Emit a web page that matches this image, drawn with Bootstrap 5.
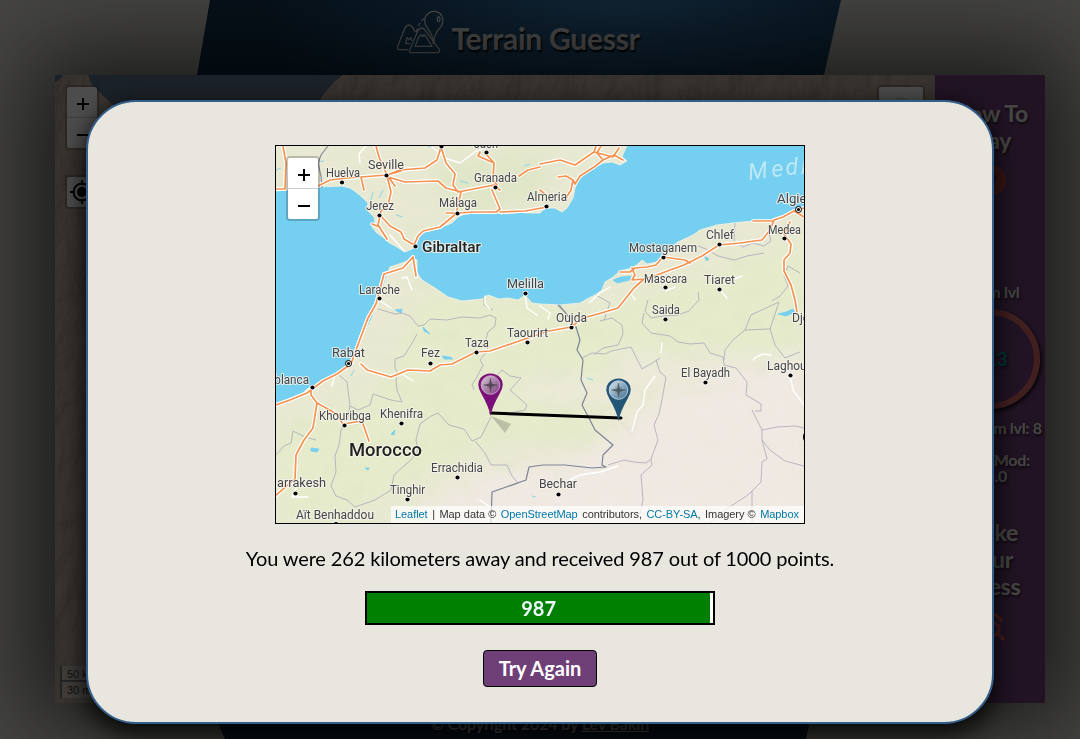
<!DOCTYPE html>
<html lang="en">
<head>
<meta charset="utf-8">
<meta name="viewport" content="width=device-width, initial-scale=1">
<title>Terrain Guessr</title>
<link href="https://cdn.jsdelivr.net/npm/bootstrap@5.3.0/dist/css/bootstrap.min.css" rel="stylesheet">
<style>
  body { font-family: Lato, sans-serif; background: #e8e6de; height: 739px; overflow: hidden; color: #000; }
  .banner { height: 75px; padding-right: 44px; clip-path: polygon(210px 0, 841px 0, 824px 100%, 197px 100%); background: radial-gradient(ellipse 360px 170px at 620px 0, #3a7db4, #225680 60%, #173b58); }
  .banner h1 { font-size: 30px; font-weight: 700; color: #fff; text-shadow: 1px 2px 2px #000; letter-spacing: -.25px; margin: 1px 0 0 6px; }
  .game { width: 990px; height: 628px; margin-left: 55px; box-shadow: 0 0 90px 22px rgba(0,0,0,.66); position: relative; }
  .terrain { width: 880px; background: #71604f; position: relative; overflow: hidden; }
  .side { width: 110px; background: #6f4078; color: #e8e6de; text-shadow: 1px 2px 3px rgba(0,0,0,.6); letter-spacing: -.3px; }
  .side h2 { font-size: 23px; line-height: 27px; font-weight: 700; margin: 0; }
  .side p { font-size: 16px; line-height: 16px; font-weight: 700; margin: 0; white-space: nowrap; }
  .q { width: 31px; height: 31px; border-radius: 50%; background: #c04848; color: #333; font-weight: 900; margin: 11px auto 0; font-size: 22px; line-height: 31px; }
  .ring { width: 100px; height: 100px; border: 6px solid #dd6868; border-radius: 50%; color: #0aa; font-size: 18px; font-weight: 700; box-shadow: 1px 2px 4px #000; margin: 9px auto 0; }
  .foot { height: 36px; clip-path: polygon(209px 0, 814px 0, 806px 100%, 225px 100%); background: #10283f; color: #ddd; font-size: 16px; font-weight: 700; text-shadow: 1px 1px 2px #000; padding-top: 9px; letter-spacing: -.1px; }
  .veil { inset: 0; background: rgba(0,0,0,.7); }
  .result { width: 908px; height: 624px; margin-top: 100px; background: #e8e6de; border: 2px solid #335f8a; border-radius: 50px; padding-top: 43px; box-shadow: 0 8px 24px 2px rgba(0,0,0,.85); }
  .map { width: 530px; height: 379px; border: 1px solid #000; position: relative; overflow: hidden; }
  .zoomer { position: absolute; left: 10px; top: 10px; width: 34px; border: 2px solid rgba(0,0,0,.2); border-radius: 4px; background-clip: padding-box; }
  .zoomer span { display: block; height: 30px; background: #fff; text-align: center; }
  .zoomer span:first-child { height: 31px; border-bottom: 1px solid #ccc; border-radius: 2px 2px 0 0; }
  .zoomer span:last-child { border-radius: 0 0 2px 2px; }
  .zoomer svg, .square svg { display: block; margin: auto; }
  .square { position: absolute; border: 2px solid rgba(0,0,0,.2); border-radius: 4px; background: #fff; background-clip: padding-box; }
  .scale { position: absolute; left: 5px; bottom: 5px; font: 11px/14px "Liberation Sans", sans-serif; color: #333; }
  .scale div { width: 90px; height: 16px; padding: 1px 5px; border: 2px solid #777; border-top: 0; background: rgba(255,255,255,.4); }
  .scale div + div { border-top: 0; border-bottom: 0; }
  .credit { position: absolute; right: 0; bottom: 0; width: 413px; height: 17px; background: rgba(255,255,255,.7); padding: 0 5px 0 4px; font: 11px/17px "Liberation Sans", sans-serif; letter-spacing: -.06px; word-spacing: .2px; color: #333; white-space: nowrap; display: flex; justify-content: space-between; }
  .credit b { font-weight: 400; color: #0078a8; }
  .lab { font-family: Roboto, sans-serif; fill: #43454b; stroke: #f6f4ea; stroke-width: 2.2px; stroke-opacity: .8; paint-order: stroke; stroke-linejoin: round; }
  .verdict { font-size: 20px; line-height: 30px; letter-spacing: -.14px; margin: 19px 0 18px; white-space: nowrap; }
  .score { width: 350px; height: 34px; border: 2px solid #000; background: #fff; border-radius: 0; }
  .score .progress-bar { background: green; font-size: 20px; font-weight: 700; color: #f0f8ff; }
  .again { width: 114px; height: 37px; margin-top: 25px; padding: 0 0 2px; border: 1px solid #000; border-radius: 4px; background: #6f4078; color: #fff; font-size: 20px; font-weight: 700; }
</style>
</head>
<body>
<header class="banner d-flex justify-content-center">
  <svg class="mt-2" width="49" height="47" viewBox="47 24 147 141" fill="none" stroke="#fff" stroke-width="3.8" stroke-linecap="round" stroke-linejoin="round">
    <path d="M82 149H58Q50 149 52 139L75 82Q86 68 97 82L104 95M88 151L112 94Q124 74 137 94L177 149Q180 158 171 158H93Q85 158 88 151M104 139L116 110L122 104L127 110L131 104L136 108L155 139ZM76 131L80 113L86 119L92 113L94 121M76 131H88"/>
    <path d="M159 131Q158 105 144 89Q127 68 136 49Q148 32 164 34Q187 38 188 60Q187 76 176 87Q163 99 159 131M108 95L111 87M115 77L118 70M124 62L130 56"/>
    <ellipse cx="175" cy="58" rx="4" ry="7"/>
  </svg>
  <h1 class="d-flex align-items-center">Terrain Guessr</h1>
</header>
<main class="game d-flex">
  <section class="terrain">
    <svg class="d-block" width="880" height="628">
      <defs>
        <filter id="relief" x="0" y="0" width="100%" height="100%"><feTurbulence type="fractalNoise" baseFrequency=".035 .02" numOctaves="5" seed="4"/><feDiffuseLighting surfaceScale="3.5" lighting-color="#c4b4a4"><feDistantLight azimuth="225" elevation="56"/></feDiffuseLighting></filter>
      </defs>
      <rect width="880" height="628" filter="url(#relief)"/>
      <path d="M33 0L37 10 60 32 100 40H255L268 20 280 6 288 0Z" fill="#5d7087"/>
      <path d="M0 0H8L4 5 0 7Z" fill="#5d7087"/>
    </svg>
    <div class="zoomer"><span><svg width="30" height="34" stroke="#000" stroke-width="2"><path d="M10 17H22M16 11V23"/></svg></span><span><svg width="30" height="34" stroke="#000" stroke-width="2"><path d="M10 17H22"/></svg></span></div>
    <div class="square" style="left:10px;top:100px;width:34px;height:34px"><svg width="30" height="30" fill="none" stroke="#000" stroke-width="1.8"><circle cx="15" cy="15" r="8.5"/><circle cx="15" cy="15" r="4" fill="#000"/><path d="M15 3V8M15 22V27M3 15H8M22 15H27"/></svg></div>
    <div class="square" style="right:10px;top:10px;width:48px;height:48px"><svg width="44" height="44"><circle cx="22" cy="20" r="10" fill="#ddd"/></svg></div>
    <div class="scale"><div>50 km</div><div>30 mi</div></div>
  </section>
  <aside class="side text-center d-flex flex-column">
    <h2 style="margin-top:25px">How To<br>Play</h2>
    <div class="q">?</div>
    <p style="margin-top:88px">Zoom lvl</p>
    <div class="ring d-flex align-items-center justify-content-center">0.13</div>
    <p style="margin:11px -9px 0 -15px">Max Zoom lvl: 8</p>
    <p style="margin-top:16px">Zoom Mod:<br>× 1.0</p>
    <h2 style="margin-top:35px">Make<br>Your<br>Guess</h2>
    <svg class="mx-auto flex-shrink-0" style="margin-top:9px" width="34" height="36" fill="none" stroke="#f06058" stroke-width="3.4"><path d="M3 15Q16-6 29 13M3 15Q8 22 15 24"/><circle cx="20" cy="20" r="6"/><path d="M24 24L31 31"/></svg>
  </aside>
</main>
<footer class="foot text-center">© Copyright 2024 by <u>Lev Bakin</u></footer>

<div class="veil position-fixed d-flex justify-content-center align-items-start">
  <div class="result d-flex flex-column align-items-center">
    <div class="map">
      <svg class="d-block" width="528" height="377" viewBox="276 146 528 377">
        <defs>
          <filter id="soft" x="-30%" y="-30%" width="160%" height="160%"><feGaussianBlur stdDeviation="11"/></filter>
          <filter id="hills" x="0" y="0" width="100%" height="100%"><feTurbulence type="fractalNoise" baseFrequency=".035 .055" numOctaves="3" seed="8"/><feColorMatrix values="0 0 0 0 .72 0 0 0 0 .78 0 0 0 0 .55 3 0 0 0 -1.45"/></filter>
          <linearGradient id="violetGlass" x2="1" y2="1"><stop stop-color="#d8cbd8"/><stop offset="1" stop-color="#7b3a7b"/></linearGradient>
          <linearGradient id="blueGlass" x2="1" y2="1"><stop stop-color="#dde5ea"/><stop offset="1" stop-color="#3b6f93"/></linearGradient>
          <linearGradient id="shade"><stop stop-opacity=".2"/><stop offset="1" stop-opacity="0"/></linearGradient>
        </defs>
        <rect x="276" y="146" width="528" height="377" fill="#e9e9d3"/>
        <g filter="url(#soft)">
          <path d="M440 160L560 150 540 205 440 215Z" fill="#e0e6c8"/>
          <path d="M425 290L600 310 804 240V360L700 350 610 390 600 440 500 440 330 523H276V430L380 390Z" fill="#e5ebcb"/>
          <path d="M500 390L560 370 600 385 620 350 710 360 804 360V523H440L500 470 530 450 600 460 660 420 650 390 600 410 540 400Z" fill="#ece9d9"/>
          <path d="M400 523L475 475 575 470 660 420 720 370 804 350V523Z" fill="#f0e9e3"/>
        </g>
        <rect x="276" y="146" width="528" height="377" filter="url(#hills)" opacity=".32"/>
        <path d="M500 502L580 460 660 400 730 385 804 385V523H480Z" fill="#f0e9e3" opacity=".75" filter="url(#soft)"/>
        <path id="sea" fill="#75cff0" stroke="#f5f4e6" stroke-width=".8" d="M275 191L287 190 318 187 342 186 350 188 356 192 362 197 368 203 367 210 374 217 375 223 372 227 377 233 383 237 388 242 397 247 405 252 412 249 416 244 418 237 422 232 430 230 442 227 452 223 458 217 465 214 475 212 490 211 502 214 515 212 528 213 540 213 545 208 555 208 562 212 567 208 570 203 573 198 575 188 578 180 590 170 603 163 612 162 620 165 627 161 622 157 627 145H806V208L798 208 792 211 785 215 773 220 763 222 753 221 733 223 717 225 700 230 693 235 678 242 663 253 657 262 647 264 642 260 638 264 632 268 620 271 612 278 605 282 602 290 595 295 587 299 580 303 560 305 540 304 532 303 525 295 518 300 508 298 499 299 488 295 482 299 472 300 462 301 448 297 435 288 422 280 417 273 417 260 412 258 405 262 390 267 387 275 383 288 378 302 372 318 365 332 362 337 357 351 347 364 337 374 318 384 307 389 300 396 285 402 275 406Z"/>
        <g fill="#75cff0" stroke="#75cff0" stroke-width=".8">
          <path d="M613 280L621 277 631 276 630 280 617 283ZM778 314L786 312 793 309 795 312 786 316ZM704 256L709 259 707 261ZM442 356L450 357 453 359 444 359ZM311 448L319 449 317 452 311 451ZM391 434L395 430 394 435ZM365 468L369 468 368 470ZM395 310L402 309 401 313ZM423 327L430 334 424 331ZM587 378L593 380M396 215L403 217M460 181L468 183M373 192L370 203M383 190L379 198M354 370L351 376M532 496L536 497M276 170L281 168M428 147L432 146M524 166L530 164M316 162L324 161"/>
        </g>
        <g fill="none" stroke="#b1b0bc" stroke-width=".9" stroke-linejoin="round">
          <path stroke="#8a8b9b" stroke-width="1.2" d="M328 146L321 155 318 163 321 176 322 188"/>
          <path d="M378 309L395 314 402 313 410 316 418 326 424 325 430 319 447 320 462 317 480 318 490 315 496 318 495 326 488 332 485 342 488 350 480 360 483 365 478 375 472 385 474 390"/>
          <path d="M417 334L411 345 404 356 395 359 395 368 398 374 396 380 397 390 402 402 391 400 373 394 370 405 358 410 350 406 347 382 338 374M350 406L347 420 341 430 339 445 335 456 336 472 331 486 336 496 347 500 355 507 375 500 391 490 394 475 405 465 411 460 418 450 416 440 420 424 431 416 438 413 449 425 464 429 472 441 481 437 491 417"/>
          <path d="M495 378L502 370 510 376 521 378 510 390 527 405 525 410 510 413"/>
          <path d="M276 455L284 446 291 443 293 431 305 437 316 440M475 441L485 453 491 465 507 465 512 476 518 483 510 486M484 296V305L493 310"/>
          <path d="M560 305L565 313 577 328M600 321L612 318 622 325 623 334 618 345 603 348 594 355M644 313L642 323 651 333 670 336 678 342 690 344 704 343 710 353 723 357 724 365 736 368 747 382 746 395 761 404 761 411 755 411M648 300L645 311 651 318 663 316 678 315 689 311 699 300 698 292M752 410L762 430 777 427 795 426 804 428M762 430V440L770 450 785 461 804 466M762 440L767 459 762 462 761 482 748 495 720 513 710 523M752 491V523"/>
          <path d="M582 358L592 353 605 354 611 351 631 347 636 357 642 369 654 362 660 358M656 360L660 372 666 377 662 400 659 414 654 425 658 440 651 459 652 465 641 475 643 500 640 514M608 465L624 460 634 462 646 463 651 459M596 295L610 303 604 320M698 246L706 249 718 256 734 260 747 256 764 253M735 223L734 241 743 247 753 243 764 246 771 241 769 233M784 275L788 266 800 273M784 275L788 286 780 296 772 301M745 330L751 315 779 302 775 314 770 329 745 330 733 340 725 350 724 360M770 329L775 345 785 358 800 352"/>
          <path stroke="#7e8396" stroke-width="1.2" d="M558 305L565 312 576 327 580 340 577 350 583 360 581 380 587 393 582 405 590 420 595 430 613 445 603 455 602 465 606 467 592 468 565 465 543 465 529 467 526 480 492 492 491 523"/>
        </g>
        <g fill="none" stroke-linecap="round" stroke-linejoin="round">
          <path stroke="#fff" stroke-width="1.4" d="M432 147L445 158 460 163 475 152 490 146M366 146L359 154 360 163M390 235L404 251M402 278L407 277 412 290M380 301L391 308M485 296V304L490 309M525 295L527 308 537 315M540 306L550 313 548 319M590 302L600 293 610 287M655 376L645 390 643 405 637 412 632 431M618 466L600 472 580 475 568 481M753 360Q760 352 771 355M790 376L793 390 804 405M400 373L413 381M300 480L292 497 308 497M480 500L490 507M335 375L332 386M720 290L727 298M630 292L635 300M742 276L730 281M666 291L675 287M662 343L661 353"/>
          <g stroke="#fff" stroke-width="3.6"><use href="#motorways"/><use href="#routes"/></g>
          <g stroke="#f5924f" stroke-width="1.7">
            <g id="motorways"><path stroke="#fff" stroke-width="3.6" d="M276 189H285L286 163 283 146M318 186L330 180 347 178 361 177 387 175 400 170 425 168 437 160 441 147M441 147L446 163 455 174 453 185 458 192 494 185 500 190M376 146L379 157 387 175M388 177L405 182 438 181 446 188 461 192 457 210M387 176L391 192 388 205 381 211 378 225 387 239M380 215L390 226 401 232 404 239 414 245 418 236 423 231 440 227 457 213 475 212 496 212 500 209 492 190M500 212L525 211 547 207M540 164L560 160 575 165 594 152 596 146M573 180L571 190 566 198"/><path d="M276 189H285L286 163 283 146M318 186L330 180 347 178 361 177 387 175 400 170 425 168 437 160 441 147M441 147L446 163 455 174 453 185 458 192 494 185 500 190M376 146L379 157 387 175M388 177L405 182 438 181 446 188 461 192 457 210M361 177L364 190M387 176L391 192 388 205 381 211 378 225 387 239M380 215L390 226 401 232 404 239 414 245 418 236 423 231 440 227 457 213 475 212 496 212 500 209 492 190M457 213L446 213M494 163L478 156 480 152M500 212L525 211 547 207M372 224L380 227M540 164L560 160 575 165 594 152 596 146M558 177L566 176 573 180 575 184 580 176 594 167 603 160 597 153 601 146M594 152L613 157 619 148M603 160L614 155 623 160M573 180L571 190 566 198M540 190L545 194M487 155L494 163 493 180 497 185M519 176L528 170 540 167M387 175L395 186M387 175L401 171"/></g>
            <g id="routes"><path stroke="#fff" stroke-width="3.6" d="M276 405L290 400 307 393 323 381 337 374 351 364 356 350 362 334 368 318 376 304 380 289 384 274 403 268 413 257 416 276M361 364L367 370 391 377 408 370 430 371 440 365 452 364 476 352 490 351 528 338 549 331 571 327 583 318 598 314 618 308 634 288 644 279 657 275 670 270 684 265 702 256 719 245 740 243 762 240 770 230 774 220 783 217 794 211 804 208M311 388V395L317 403 313 428 304 440 296 455 295 479 276 495M317 403L335 413 343 424 362 421 369 441M790 222L784 234 791 244 790 253 784 260 784 271 791 285 795 300 797 312"/><path d="M276 405L290 400 307 393 323 381 337 374 351 364 356 350 362 334 368 318 376 304 380 289 384 274 403 268 413 257 416 276M361 364L367 370 391 377 408 370 430 371 440 365 452 364 476 352 490 351 528 338 549 331 571 327 583 318 598 314 618 308 634 288 644 279 657 275 670 270 684 265 702 256 719 245 740 243 762 240 770 230 774 220 783 217 794 211 804 208M753 221L774 221M794 211L804 217M311 388V395L317 403 313 428 304 440 296 455 295 479 276 495M317 403L335 413 343 424 362 421 369 441M620 272L630 272 635 268 647 267 656 265 663 257 685 260 690 263M632 268L635 275 632 280 644 279M790 222L784 234 791 244 790 253 784 260 784 271 791 285 795 300 797 312"/></g>
          </g>
        </g>
        <g id="places"></g>
        <g fill="#bfe8f5" font-family="Roboto,sans-serif" font-size="23" font-style="italic"><text x="749" y="180" transform="rotate(-7 749 180)">M</text><text x="772" y="177" transform="rotate(-5 772 177)">e</text><text x="786" y="175" transform="rotate(-4 786 175)">d</text><text x="801" y="174">i</text></g>
        <ellipse cx="805" cy="437" rx="2" ry="4"/>
        <path d="M491 416L511 424 505 433Z M619 421L641 428 632 438Z" fill="url(#shade)"/>
        <path d="M491 413L621 418" stroke="#000" stroke-width="3" stroke-linecap="round"/>
        <g transform="translate(490.5 386)"><path d="M0 30Q-2 20-9 8Q-15-2-10-8Q-6-12.500 0-12.500Q6-12.500 10-8Q15-2 9 8Q2 20 0 30Z" fill="#7b1178"/><circle cy="-1" r="9.3" fill="url(#violetGlass)" stroke="#d3b6d2" stroke-width=".8"/><path d="M0-8L1.200-2 7-1 1.200 .5 0 6-1.200 .5-7-1-1.200-2ZM-3-4L3 2M3-4L-3 2" fill="#574859" stroke="#574859" stroke-width=".4"/></g>
        <g transform="translate(618.5 391)"><path d="M0 30Q-2 20-9 8Q-15-2-10-8Q-6-12.500 0-12.500Q6-12.500 10-8Q15-2 9 8Q2 20 0 30Z" fill="#235577"/><circle cy="-1" r="9.3" fill="url(#blueGlass)" stroke="#c6dae6" stroke-width=".8"/><path d="M0-8L1.200-2 7-1 1.200 .5 0 6-1.200 .5-7-1-1.200-2ZM-3-4L3 2M3-4L-3 2" fill="#4c5961" stroke="#4c5961" stroke-width=".4"/></g>
      </svg>
      <div class="zoomer"><span><svg width="30" height="34" stroke="#000" stroke-width="2"><path d="M10 17H22M16 11V23"/></svg></span><span><svg width="30" height="34" stroke="#000" stroke-width="2"><path d="M10 17H22"/></svg></span></div>
      <div class="credit"><b>Leaflet</b><span>|</span><span>Map data ©</span><b>OpenStreetMap</b><span>contributors,</span><span><b>CC-BY-SA</b>,</span><span>Imagery ©</span><b>Mapbox</b></div>
    </div>
    <p class="verdict">You were 262 kilometers away and received 987 out of 1000 points.</p>
    <div class="score progress"><div class="progress-bar" style="width:99.2%">987</div></div>
    <button class="again btn">Try Again</button>
  </div>
</div>
<script src="https://cdn.jsdelivr.net/npm/bootstrap@5.3.0/dist/js/bootstrap.bundle.min.js"></script>
<script>
  // name, label left, baseline, label width, dot x, dot y, size, weight, capital
  const places = [
    ['Huelva',326,177,34,342,182.5],['Seville',368,169,36,386.5,175.5],['Jerez',366,210,28,379.5,215.5],
    ['Jaén',474,148,24,486.5,152.5],['Granada',474,182,43,495.5,187.5],['Málaga',439,207,38,457.5,213.5],
    ['Almeria',527,201,40,546.5,206.5],['Gibraltar',422,251.5,59,415.5,246.5,14,500],['Larache',359,294,41,379.5,298.5],
    ['Melilla',507,288,37,525.5,293.5],['Oujda',556,322,31,571.5,327.5],['Taourirt',507,337,41,527.5,342.5],
    ['Taza',465,347,24,476.5,352.5],['Fez',421,357,19,430.5,363.5],['Rabat',332,357,33,348.5,363.5,12.5,400,'c'],
    ['Casablanca',248,384,61,312.5,387.5],['Khouribga',319,420,52,344.5,425.5],['Khenifra',380,418,43,401.5,423.5],
    ['Morocco',349,456,73,0,0,18.5,500],['Marrakesh',266,487,60,295.5,493.5],['Errachidia',431,472,52,457.5,477.5],
    ['Tinghir',390,494,35,407.5,499.5],['Aït Benhaddou',296,519,78,336,524],['Bechar',539,488,38,558.5,494.5],
    ['El Bayadh',681,377,49,705.5,382.5],['Laghouat',767,370,50,790.5,375.5],['Saida',652,314,28,665.5,319.5],
    ['Mascara',644,283,43,665.5,287.5],['Tiaret',704,284,31,719.5,289.5],['Mostaganem',629,252,68,663.5,257.5],
    ['Chlef',706,239,28,719.5,244.5],['Medea',768,234,33,784.5,238.5],['Algiers',777,203,41,798.5,209.5,12.5,400,'c'],
    ['Djelfa',792,322,31,0,0],['',0,0,0,441.5,146.5]
  ];
  const dot = (x, y, c) => !x ? '' : c
    ? `<circle cx="${x}" cy="${y}" r="3" fill="#fff" stroke="#000"/><circle cx="${x}" cy="${y}" r="1.6"/>`
    : `<circle cx="${x}" cy="${y}" r="2.1" stroke="#fff" stroke-width="1.4" paint-order="stroke"/>`;
  document.getElementById('places').innerHTML = places.map(([n, x, y, w, dx, dy, s = 12.5, b = 400, c]) =>
    dot(dx, dy, c) + (n ? `<text class="lab" x="${x}" y="${y}" textLength="${w}" lengthAdjust="spacingAndGlyphs" style="font-size:${s}px;font-weight:${b}${s > 13 ? ';fill:#222' : ''}">${n}</text>` : '')).join('');
</script>
</body>
</html>
